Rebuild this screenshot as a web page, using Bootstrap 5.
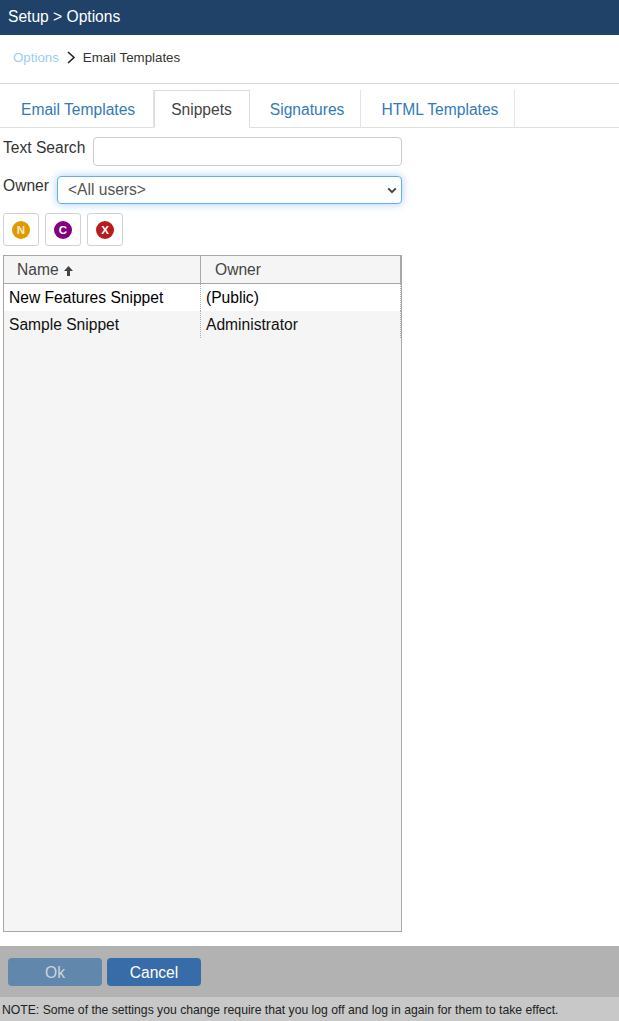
<!DOCTYPE html>
<html lang="en">
<head>
<meta charset="utf-8">
<title>Options</title>
<link href="https://cdn.jsdelivr.net/npm/bootstrap@5.3.0/dist/css/bootstrap.min.css" rel="stylesheet">
<style>
html,body{height:100%}
body{font-family:"Liberation Sans",Arial,sans-serif;font-size:15.6px;color:#333;background:#fff;overflow:hidden}
.shell{height:1021px}
.topbar{height:35px;background:#204269;color:#fff;padding:8px 8px 0;line-height:18px}
.crumbs{height:49px;padding:0 13px;border-bottom:1px solid #d9d9d9;font-size:13.3px;gap:7px;line-height:16px;padding-bottom:3px}
.crumbs .first{color:#98cff0}
.tabbar{padding:6px 0 0 3px;height:44px;border-bottom:1px solid #e0e0e0;flex-wrap:nowrap}
.tabbar .tabitem{height:38px;line-height:39px;color:#337ab7;border-right:1px solid #e4e4e4;text-decoration:none;display:block}
.tabbar .tabitem.t1{padding:0 18px 0 18px}
.tabbar .tabitem.on{color:#444;background:#fff;border:1px solid #dcdcdc;border-bottom-color:#fff;padding:0 17px 0 16px;line-height:37px}
.tabbar .tabitem.t3{padding:0 16px 0 20px}
.tabbar .tabitem.t4{padding:0 16px 0 20px}
.formzone{width:399px;margin-left:3px}
.flabel{line-height:18px;margin:0;padding-top:2px}
.row-owner .flabel{padding-top:1px}
.fbox{border:1px solid #ccc;border-radius:4px;background-color:#fff;height:29px;padding:0 10px;box-shadow:none;font-size:15.6px}
.fbox.form-select{height:28px;color:#555;border-color:#66afe9;box-shadow:0 0 8px rgba(102,175,233,.6);padding:0 10px;background-image:url("data:image/svg+xml,%3csvg xmlns='http://www.w3.org/2000/svg' viewBox='0 0 12 8'%3e%3cpath fill='none' stroke='%23444' stroke-width='2.4' d='M1.5 1.5L6 6l4.5-4.5'/%3e%3c/svg%3e");background-size:10px 7px;background-position:right 4px center}
.row-search{padding-top:9px;gap:8px}
.row-owner{padding-top:10px;gap:8px}
.toolrow{gap:6px;padding-top:9px}
.tbtn{width:36px;height:33px;border:1px solid #d2d2d2;border-radius:3px;background:#fff;padding:0;display:flex;align-items:center;justify-content:center}
.gridbox{width:399px;margin:9px 0 0 3px;height:677px;border:1px solid #a8a8a8;background:#f5f5f5}
.gridhead{height:28px;background:#f5f5f5;border-bottom:1px solid #a8a8a8;line-height:27px;color:#444}
.gridhead>div{padding-left:13px}
.gridhead>div:first-child{width:197px;border-right:1px solid #a8a8a8}
.gridhead>div:last-child{flex:1;border-right:1px solid #a8a8a8;padding-left:14px}
.gridline{height:27px;line-height:27px;color:#111}
.gridline>div:first-child{width:197px;padding-left:5px;border-right:1px dotted #aaa}
.gridline>div:last-child{flex:1;padding-left:5px;border-right:1px dotted #aaa}
.gridline.w{background:#fff;color:#000}
.gridline.g{background:#f5f5f5}
.spacer{flex:1}
.footbar{height:51px;background:#b2b2b2;padding:12px 8px 0;gap:5px}
.fbtn{width:94px;height:28px;border-radius:4px;background:#376ca8;border:0;color:#fff;padding:1px 0 0;font-size:15.6px;line-height:27px}
.fbtn.off{background:#6287ad;color:#ccd5de}
.notebar{height:24px;background:#c8c8c8;font-size:12.2px;line-height:27px;padding-left:2px;color:#222;white-space:nowrap}
</style>
</head>
<body>
<div class="shell d-flex flex-column">
  <div class="topbar">Setup &gt; Options</div>
  <div class="crumbs d-flex align-items-center">
    <span class="first">Options</span>
    <svg width="10" height="13" viewBox="0 0 10 13"><path d="M2 1l6 5.5L2 12" fill="none" stroke="#222" stroke-width="1.6"/></svg>
    <span>Email Templates</span>
  </div>
  <div class="tabbar d-flex">
    <a class="tabitem t1" href="#">Email Templates</a>
    <a class="tabitem on t2" href="#">Snippets</a>
    <a class="tabitem t3" href="#">Signatures</a>
    <a class="tabitem t4" href="#">HTML Templates</a>
  </div>
  <div class="formzone">
    <div class="row-search d-flex">
      <label class="flabel" for="ts">Text Search</label>
      <input id="ts" class="form-control fbox flex-grow-1 w-auto" type="text">
    </div>
    <div class="row-owner d-flex">
      <label class="flabel" for="ow">Owner</label>
      <select id="ow" class="form-select fbox flex-grow-1 w-auto"><option>&lt;All users&gt;</option></select>
    </div>
    <div class="toolrow d-flex">
      <button class="tbtn" type="button"><svg width="18" height="18" viewBox="0 0 18 18"><circle cx="9" cy="9" r="9" fill="#e09a00"/><text x="9" y="13" text-anchor="middle" font-size="11.5" font-weight="700" fill="#fdeccb" font-family="Liberation Sans">N</text></svg></button>
      <button class="tbtn" type="button"><svg width="18" height="18" viewBox="0 0 18 18"><circle cx="9" cy="9" r="9" fill="#800080"/><text x="9" y="13" text-anchor="middle" font-size="11.5" font-weight="700" fill="#fff" font-family="Liberation Sans">C</text></svg></button>
      <button class="tbtn" type="button"><svg width="18" height="18" viewBox="0 0 18 18"><circle cx="9" cy="9" r="9" fill="#b81c1c"/><text x="9" y="13" text-anchor="middle" font-size="11.5" font-weight="700" fill="#fff" font-family="Liberation Sans">X</text></svg></button>
    </div>
  </div>
  <div class="gridbox">
    <div class="gridhead d-flex">
      <div>Name <svg width="11" height="12" viewBox="0 0 11 12"><path d="M5.5 1L1 6h3v5h3V6h3z" fill="#444"/></svg></div>
      <div>Owner</div>
    </div>
    <div class="gridline w d-flex"><div>New Features Snippet</div><div>(Public)</div></div>
    <div class="gridline g d-flex"><div>Sample Snippet</div><div>Administrator</div></div>
  </div>
  <div class="spacer"></div>
  <div class="footbar d-flex">
    <button class="fbtn off" type="button">Ok</button>
    <button class="fbtn" type="button">Cancel</button>
  </div>
  <div class="notebar">NOTE: Some of the settings you change require that you log off and log in again for them to take effect.</div>
</div>
<script src="https://cdn.jsdelivr.net/npm/bootstrap@5.3.0/dist/js/bootstrap.bundle.min.js"></script>
</body>
</html>
